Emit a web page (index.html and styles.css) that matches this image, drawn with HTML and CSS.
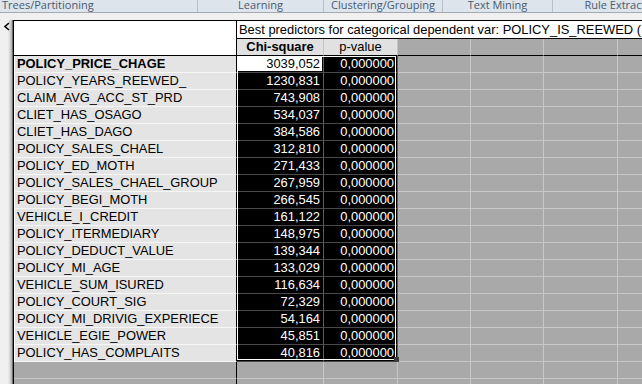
FILE: index.html
```html
<!DOCTYPE html>
<html>
<head>
<meta charset="utf-8">
<link rel="stylesheet" href="styles.css">
</head>
<body>
<div class="tabs">
  <div class="tab t1"><span>Trees/Partitioning</span></div>
  <div class="tab t2"><span>Learning</span></div>
  <div class="tab t3"><span>Clustering/Grouping</span></div>
  <div class="tab t4"><span>Text Mining</span></div>
  <div class="tab t5"><span>Rule Extraction</span></div>
</div>
<div class="strip"></div>
<div class="main">
  <div class="side">
    <svg class="arrow" width="8" height="9" viewBox="0 0 8 9"><polyline points="6,1 2,4.5 6,8" fill="none" stroke="#000" stroke-width="1.6"/></svg>
  </div>
  <div class="sheet">
    <table class="grid">
      <colgroup>
        <col class="c0"><col class="c1"><col class="c2"><col class="c3"><col class="c3"><col class="c5"><col class="c3">
      </colgroup>
      <tr class="r-title">
        <td class="corner" rowspan="2"></td>
        <td class="title" colspan="6">Best predictors for categorical dependent var: POLICY_IS_REEWED (</td>
      </tr>
      <tr class="r-head">
        <td class="ch b">Chi-square</td>
        <td class="ch">p-value</td>
        <td class="cg"></td><td class="cg"></td><td class="cg"></td><td class="cg"></td>
      </tr>
      <tr><td class="rh b">POLICY_PRICE_CHAGE</td><td class="num act">3039,052</td><td class="num">0,000000</td><td class="g"></td><td class="g"></td><td class="g"></td><td class="g"></td></tr>
      <tr><td class="rh">POLICY_YEARS_REEWED_</td><td class="num">1230,831</td><td class="num">0,000000</td><td class="g"></td><td class="g"></td><td class="g"></td><td class="g"></td></tr>
      <tr><td class="rh">CLAIM_AVG_ACC_ST_PRD</td><td class="num">743,908</td><td class="num">0,000000</td><td class="g"></td><td class="g"></td><td class="g"></td><td class="g"></td></tr>
      <tr><td class="rh">CLIET_HAS_OSAGO</td><td class="num">534,037</td><td class="num">0,000000</td><td class="g"></td><td class="g"></td><td class="g"></td><td class="g"></td></tr>
      <tr><td class="rh">CLIET_HAS_DAGO</td><td class="num">384,586</td><td class="num">0,000000</td><td class="g"></td><td class="g"></td><td class="g"></td><td class="g"></td></tr>
      <tr><td class="rh">POLICY_SALES_CHAEL</td><td class="num">312,810</td><td class="num">0,000000</td><td class="g"></td><td class="g"></td><td class="g"></td><td class="g"></td></tr>
      <tr><td class="rh">POLICY_ED_MOTH</td><td class="num">271,433</td><td class="num">0,000000</td><td class="g"></td><td class="g"></td><td class="g"></td><td class="g"></td></tr>
      <tr><td class="rh">POLICY_SALES_CHAEL_GROUP</td><td class="num">267,959</td><td class="num">0,000000</td><td class="g"></td><td class="g"></td><td class="g"></td><td class="g"></td></tr>
      <tr><td class="rh">POLICY_BEGI_MOTH</td><td class="num">266,545</td><td class="num">0,000000</td><td class="g"></td><td class="g"></td><td class="g"></td><td class="g"></td></tr>
      <tr><td class="rh">VEHICLE_I_CREDIT</td><td class="num">161,122</td><td class="num">0,000000</td><td class="g"></td><td class="g"></td><td class="g"></td><td class="g"></td></tr>
      <tr><td class="rh">POLICY_ITERMEDIARY</td><td class="num">148,975</td><td class="num">0,000000</td><td class="g"></td><td class="g"></td><td class="g"></td><td class="g"></td></tr>
      <tr><td class="rh">POLICY_DEDUCT_VALUE</td><td class="num">139,344</td><td class="num">0,000000</td><td class="g"></td><td class="g"></td><td class="g"></td><td class="g"></td></tr>
      <tr><td class="rh">POLICY_MI_AGE</td><td class="num">133,029</td><td class="num">0,000000</td><td class="g"></td><td class="g"></td><td class="g"></td><td class="g"></td></tr>
      <tr><td class="rh">VEHICLE_SUM_ISURED</td><td class="num">116,634</td><td class="num">0,000000</td><td class="g"></td><td class="g"></td><td class="g"></td><td class="g"></td></tr>
      <tr><td class="rh">POLICY_COURT_SIG</td><td class="num">72,329</td><td class="num">0,000000</td><td class="g"></td><td class="g"></td><td class="g"></td><td class="g"></td></tr>
      <tr><td class="rh">POLICY_MI_DRIVIG_EXPERIECE</td><td class="num">54,164</td><td class="num">0,000000</td><td class="g"></td><td class="g"></td><td class="g"></td><td class="g"></td></tr>
      <tr><td class="rh">VEHICLE_EGIE_POWER</td><td class="num">45,851</td><td class="num">0,000000</td><td class="g"></td><td class="g"></td><td class="g"></td><td class="g"></td></tr>
      <tr><td class="rh">POLICY_HAS_COMPLAITS</td><td class="num">40,816</td><td class="num">0,000000</td><td class="g"></td><td class="g"></td><td class="g"></td><td class="g"></td></tr>
      <tr><td class="rg"></td><td class="g"></td><td class="g"></td><td class="g"></td><td class="g"></td><td class="g"></td><td class="g"></td></tr>
      <tr><td class="rg"></td><td class="g"></td><td class="g"></td><td class="g"></td><td class="g"></td><td class="g"></td><td class="g"></td></tr>
    </table>
    <div class="selbox"></div>
    <div class="handle"></div>
  </div>
</div>
</body>
</html>
```
FILE: styles.css
```css
html, body {
  margin: 0;
  padding: 0;
}
body {
  width: 642px;
  height: 384px;
  overflow: hidden;
  background: #f0f0f0;
  font-family: "Liberation Sans", Arial, sans-serif;
}
.tabs {
  display: flex;
  height: 12px;
  background: #dde4ec;
  border-bottom: 1px solid #a3aab2;
  overflow: hidden;
  font-family: "Open Sans", sans-serif;
  font-size: 11px;
  color: #4a5a6e;
}
.tab {
  flex: none;
  height: 12px;
  line-height: 12px;
  box-sizing: border-box;
  border-right: 1px solid #b7c1cb;
  text-align: center;
  white-space: nowrap;
  overflow: hidden;
}
.tab span {
  display: block;
  margin-top: -1px;
}
.t1 { width: 198px; text-align: left; padding-left: 2px; }
.t2 { width: 126px; }
.t3 { width: 119px; }
.t4 { width: 110px; }
.t5 { width: 140px; border-right: none; }
.strip {
  height: 7px;
  background: #f0f0f0;
}
.main {
  display: flex;
  height: 364px;
}
.side {
  flex: none;
  width: 12px;
  background: linear-gradient(to right, #f0f0f0 0, #f0f0f0 8px, #d4d4d4 10px, #a8a8a8 12px);
  border-right: 1px solid #707070;
}
.arrow {
  display: block;
  margin: 2px 0 0 3px;
}
.sheet {
  flex: 1;
  position: relative;
  overflow: hidden;
  background: #a9a9a9;
}
.grid {
  border-collapse: separate;
  border-spacing: 0;
  table-layout: fixed;
  width: 678px;
  border-top: 1px solid #000;
  border-left: 1px solid #000;
  font-size: 12.9px;
  color: #000;
}
.c0 { width: 223px; }
.c1 { width: 87px; }
.c2 { width: 74px; }
.c3 { width: 73px; }
.c5 { width: 74px; }
.grid td {
  box-sizing: border-box;
  height: 17px;
  padding: 0 3px;
  line-height: 16px;
  white-space: nowrap;
  overflow: hidden;
  border-right: 1px solid #c8c8c8;
  border-bottom: 1px solid #c8c8c8;
}
.grid .r-title td { height: 18px; }
.grid td.b { font-weight: bold; }
.grid td.corner {
  background: #fff;
  border-right-color: #000;
  border-bottom-color: #000;
}
.grid td.title {
  background: #fff;
  border-right: none;
  border-bottom-color: #000;
  padding-left: 2px;
  overflow: visible;
}
.grid td.ch {
  background: #e1e1e1;
  text-align: center;
  border-right-color: #c4c4c4;
  border-bottom-color: #000;
}
.grid td.cg {
  background: #a9a9a9;
  border-bottom-color: #000;
}
.grid td.rh {
  background: #e4e4e4;
  border-right-color: #000;
  border-bottom-color: #f6f6f6;
  box-shadow: inset 1px 0 0 #fafafa;
}
.grid td.num {
  background: #000;
  color: #fff;
  text-align: right;
  border-right-color: #5c5c5c;
  border-bottom-color: #4a4a4a;
}
.grid td.num.act {
  background: #fff;
  color: #000;
  box-shadow: inset 0 0 0 1px #000;
}
.grid td.g {
  background: #a9a9a9;
}
.grid td.rg {
  background: #a9a9a9;
  border-right-color: #000;
}
.selbox {
  position: absolute;
  left: 224px;
  top: 36px;
  width: 159px;
  height: 304px;
  box-sizing: border-box;
  border: 1px solid #fff;
  pointer-events: none;
}
.handle {
  position: absolute;
  left: 381px;
  top: 337px;
  width: 5px;
  height: 5px;
  background: #3c3c3c;
}
```
